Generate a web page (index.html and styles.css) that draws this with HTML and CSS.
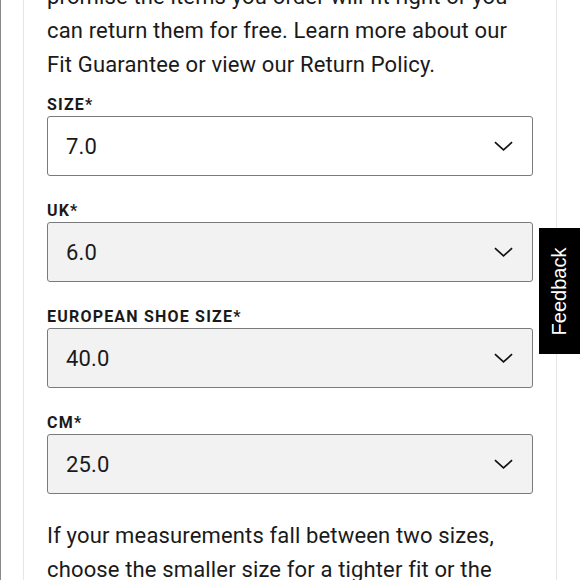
FILE: index.html
```html
<!DOCTYPE html>
<html>
<head>
<meta charset="utf-8">
<link rel="stylesheet" href="styles.css">
</head>
<body>
<div class="page">
  <div class="panel">
    <p class="copy">promise the items you order will fit right or you can return them for free. Learn more about our Fit Guarantee or view our Return Policy.</p>
    <div class="field">
      <div class="label">SIZE*</div>
      <div class="select white"><span>7.0</span><svg class="chev" viewBox="0 0 20 10"><path d="M1 1 L10 9 L19 1" fill="none" stroke="#111" stroke-width="1.8"/></svg></div>
    </div>
    <div class="field">
      <div class="label">UK*</div>
      <div class="select"><span>6.0</span><svg class="chev" viewBox="0 0 20 10"><path d="M1 1 L10 9 L19 1" fill="none" stroke="#111" stroke-width="1.8"/></svg></div>
    </div>
    <div class="field">
      <div class="label">EUROPEAN SHOE SIZE*</div>
      <div class="select"><span>40.0</span><svg class="chev" viewBox="0 0 20 10"><path d="M1 1 L10 9 L19 1" fill="none" stroke="#111" stroke-width="1.8"/></svg></div>
    </div>
    <div class="field">
      <div class="label">CM*</div>
      <div class="select"><span>25.0</span><svg class="chev" viewBox="0 0 20 10"><path d="M1 1 L10 9 L19 1" fill="none" stroke="#111" stroke-width="1.8"/></svg></div>
    </div>
    <p class="copy">If your measurements fall between two sizes, choose the smaller size for a tighter fit or the larger size for a looser fit.</p>
  </div>
</div>
<div class="feedback"><span>Feedback</span></div>
</body>
</html>
```
FILE: styles.css
```css
html, body {
  margin: 0;
  padding: 0;
  background: #fff;
  height: 580px;
  overflow: hidden;
}
body {
  font-family: Roboto, "Noto Sans", sans-serif;
  color: #1a1a1a;
  border-left: 1px solid #8a8a8a;
  box-sizing: border-box;
}
.page {
  padding-left: 22px;
}
.panel {
  width: 486px;
  border-left: 1px solid #e6e6e6;
  border-right: 1px solid #e6e6e6;
  padding: 0 23px;
  margin-top: -20px;
  min-height: 700px;
}
.copy {
  margin: 0;
  font-size: 22px;
  line-height: 34px;
  letter-spacing: 0.15px;
}
.copy:first-child {
  margin-bottom: 12px;
}
.field {
  margin-bottom: 24px;
}
.field:last-of-type {
  margin-bottom: 25px;
}
.label {
  font-size: 16px;
  font-weight: 700;
  line-height: 22px;
  margin-bottom: 0;
  letter-spacing: 1.2px;
}
.select {
  height: 60px;
  box-sizing: border-box;
  border: 1px solid #7a7a7a;
  border-radius: 3px;
  background: #f2f2f2;
  display: flex;
  align-items: center;
  justify-content: space-between;
  padding: 0 19px 0 18px;
  font-size: 22px;
  letter-spacing: 0.15px;
}
.select.white {
  background: #fff;
}
.chev {
  width: 19px;
  height: 10px;
}
.feedback {
  position: absolute;
  top: 228px;
  right: 0;
  width: 41px;
  height: 126px;
  background: #000;
  display: flex;
  align-items: center;
  justify-content: center;
}
.feedback span {
  color: #fff;
  font-family: "Liberation Sans", Arial, sans-serif;
  font-size: 20px;
  transform: rotate(-90deg);
  white-space: nowrap;
}
```
